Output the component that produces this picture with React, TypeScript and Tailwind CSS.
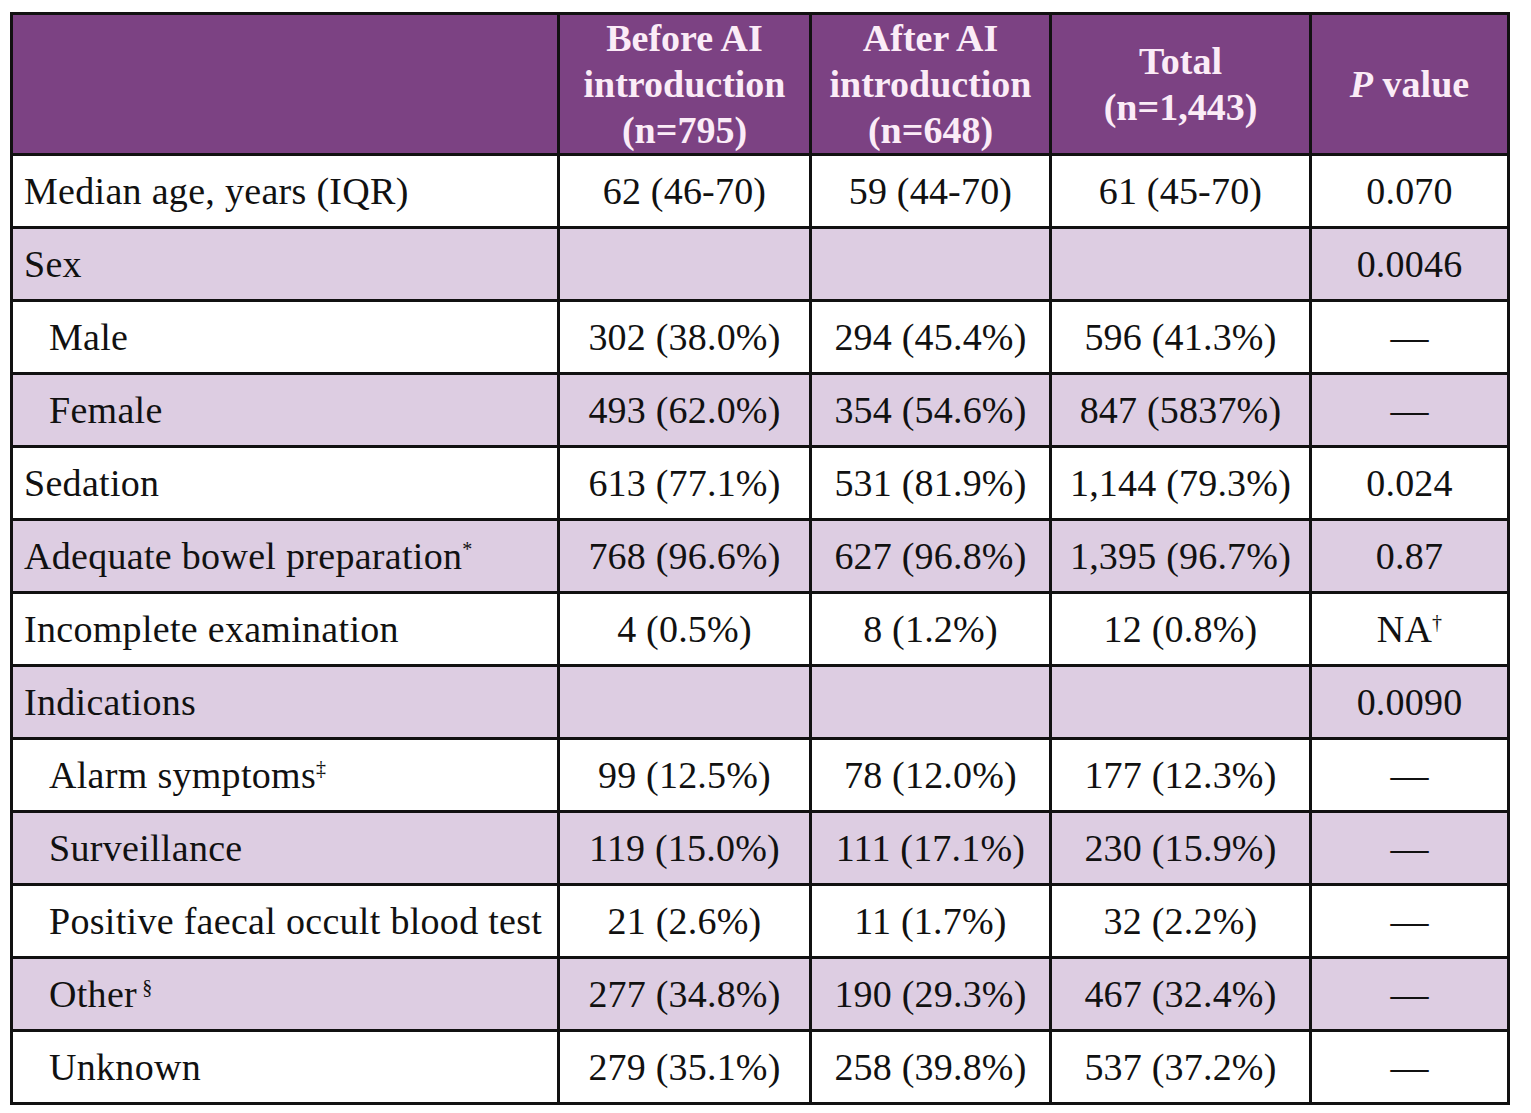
type Row = {
  label: string;
  sup?: string;
  supSpace?: boolean;
  indent?: boolean;
  before: string;
  after: string;
  total: string;
  p: string;
  pSup?: string;
};

const rows: Row[] = [
  { label: "Median age, years (IQR)", before: "62 (46-70)", after: "59 (44-70)", total: "61 (45-70)", p: "0.070" },
  { label: "Sex", before: "", after: "", total: "", p: "0.0046" },
  { label: "Male", indent: true, before: "302 (38.0%)", after: "294 (45.4%)", total: "596 (41.3%)", p: "—" },
  { label: "Female", indent: true, before: "493 (62.0%)", after: "354 (54.6%)", total: "847 (5837%)", p: "—" },
  { label: "Sedation", before: "613 (77.1%)", after: "531 (81.9%)", total: "1,144 (79.3%)", p: "0.024" },
  { label: "Adequate bowel preparation", sup: "*", before: "768 (96.6%)", after: "627 (96.8%)", total: "1,395 (96.7%)", p: "0.87" },
  { label: "Incomplete examination", before: "4 (0.5%)", after: "8 (1.2%)", total: "12 (0.8%)", p: "NA", pSup: "†" },
  { label: "Indications", before: "", after: "", total: "", p: "0.0090" },
  { label: "Alarm symptoms", sup: "‡", indent: true, before: "99 (12.5%)", after: "78 (12.0%)", total: "177 (12.3%)", p: "—" },
  { label: "Surveillance", indent: true, before: "119 (15.0%)", after: "111 (17.1%)", total: "230 (15.9%)", p: "—" },
  { label: "Positive faecal occult blood test", indent: true, before: "21 (2.6%)", after: "11 (1.7%)", total: "32 (2.2%)", p: "—" },
  { label: "Other", sup: "§", supSpace: true, indent: true, before: "277 (34.8%)", after: "190 (29.3%)", total: "467 (32.4%)", p: "—" },
  { label: "Unknown", indent: true, before: "279 (35.1%)", after: "258 (39.8%)", total: "537 (37.2%)", p: "—" },
];

const Cell = ({ shaded, children }: { shaded: boolean; children?: React.ReactNode }) => (
  <div
    className={`flex items-center justify-center text-[38px] leading-none tracking-[0.2px] text-[#111] ${
      shaded ? "bg-[#ddcde2]" : "bg-white"
    }`}
  >
    {children}
  </div>
);

export default function App() {
  return (
    <div className="min-h-screen bg-white pl-[10px] pt-[12px] font-['Liberation_Serif','Times_New_Roman',serif]">
      <div className="grid w-fit grid-cols-[544px_249px_237px_257px_195px] grid-rows-[138px_repeat(13,70px)] gap-[3px] bg-[#111] p-[3px]">
        {/* Header */}
        <div className="bg-[#7c4283]" />
        {[
          ["Before AI", "introduction", "(n=795)"],
          ["After AI", "introduction", "(n=648)"],
          ["Total", "(n=1,443)"],
        ].map((lines) => (
          <div
            key={lines.join("")}
            className="flex flex-col items-center justify-center bg-[#7c4283] text-center text-[38px] font-bold leading-[46px] text-[#fbecf7]"
          >
            {lines.map((l) => (
              <span key={l}>{l}</span>
            ))}
          </div>
        ))}
        <div className="flex items-center justify-center bg-[#7c4283] text-[38px] font-bold text-[#fbecf7]">
          <span>
            <i>P</i> value
          </span>
        </div>

        {/* Body */}
        {rows.map((r, i) => {
          const shaded = i % 2 === 1;
          return [
            <div
              key={r.label + "-l"}
              className={`flex items-center text-[38px] leading-none tracking-[0.3px] text-[#111] ${
                r.indent ? "pl-[36px]" : "pl-[11px]"
              } ${shaded ? "bg-[#ddcde2]" : "bg-white"}`}
            >
              <span>
                {r.label}
                {r.sup && (
                  <sup className="relative -top-[13px] text-[20px]">
                    {r.supSpace ? "\u00a0" : ""}
                    {r.sup}
                  </sup>
                )}
              </span>
            </div>,
            <Cell key={r.label + "-b"} shaded={shaded}>{r.before}</Cell>,
            <Cell key={r.label + "-a"} shaded={shaded}>{r.after}</Cell>,
            <Cell key={r.label + "-t"} shaded={shaded}>{r.total}</Cell>,
            <Cell key={r.label + "-p"} shaded={shaded}>
              <span>
                {r.p}
                {r.pSup && <sup className="relative -top-[13px] text-[20px]">{r.pSup}</sup>}
              </span>
            </Cell>,
          ];
        })}
      </div>
    </div>
  );
}
